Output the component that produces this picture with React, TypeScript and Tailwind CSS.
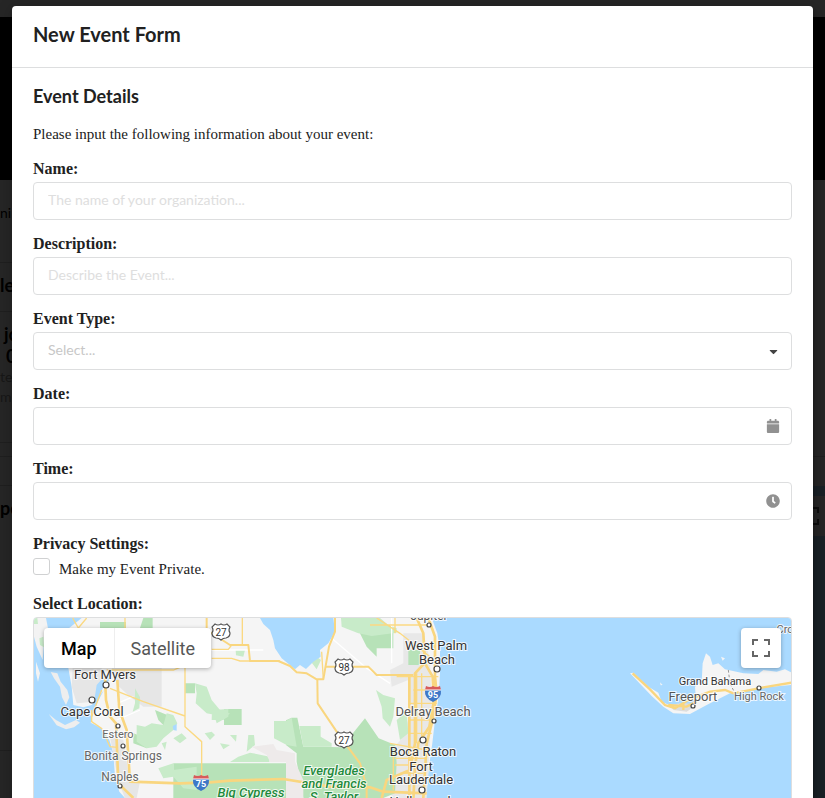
import type { ReactNode } from "react";
import { FaCalendar, FaCaretDown, FaClock } from "react-icons/fa";

const fieldBox =
  "h-[38px] w-full rounded border border-[#dddedf] bg-white px-3.5 font-['Lato',sans-serif] text-sm text-[#212121] outline-none focus:border-[#85b7d9]";
const labelText = "block text-[16px] leading-[19px] font-bold";

function Field({ id, label, icon, children }: { id: string; label: string; icon?: ReactNode; children: ReactNode }) {
  return (
    <div>
      <label htmlFor={id} className={labelText}>
        {label}
      </label>
      <div className="relative mt-1">
        {children}
        {icon && (
          <span className="pointer-events-none absolute inset-y-0 right-0 flex w-[38px] items-center justify-center">
            {icon}
          </span>
        )}
      </div>
    </div>
  );
}

type Place = { text: string; x: number; y: number; size: number; color?: string; park?: boolean };

const places: Place[] = [
  { text: "Fort Myers", x: 105, y: 679, size: 13 },
  { text: "Cape Coral", x: 92, y: 716, size: 13 },
  { text: "Estero", x: 118, y: 738, size: 11, color: "#666" },
  { text: "Bonita Springs", x: 123, y: 760, size: 12, color: "#666" },
  { text: "Naples", x: 120, y: 781, size: 12, color: "#666" },
  { text: "Jupiter", x: 429, y: 620, size: 12, color: "#555" },
  { text: "West Palm", x: 436, y: 650, size: 13 },
  { text: "Beach", x: 437, y: 664, size: 13 },
  { text: "Delray Beach", x: 433, y: 716, size: 13, color: "#555" },
  { text: "Boca Raton", x: 423, y: 756, size: 13 },
  { text: "Fort", x: 421, y: 771, size: 13 },
  { text: "Lauderdale", x: 421, y: 784, size: 13 },
  { text: "Hollywood", x: 420, y: 806, size: 13 },
  { text: "Crown Haven", x: 809, y: 633, size: 11, color: "#666" },
  { text: "Grand Bahama", x: 715, y: 685, size: 11, color: "#333" },
  { text: "Freeport", x: 693, y: 701, size: 13, color: "#555" },
  { text: "High Rock", x: 759, y: 700, size: 11, color: "#666" },
  { text: "Everglades", x: 334, y: 775, size: 13, park: true },
  { text: "and Francis", x: 334, y: 788, size: 13, park: true },
  { text: "S. Taylor", x: 334, y: 801, size: 13, park: true },
  { text: "Big Cypress", x: 251, y: 797, size: 13, park: true },
];

const towns = [
  [106, 685, 3],
  [92, 700, 3],
  [118, 726, 2],
  [123, 746, 2],
  [120, 786, 2],
  [429, 625, 2],
  [437, 669, 3],
  [434, 721, 2],
  [423, 740, 3],
  [422, 790, 3],
  [693, 706, 2],
  [759, 688, 2],
];

function UsShield({ x, y, n }: { x: number; y: number; n: string }) {
  return (
    <g transform={`translate(${x} ${y})`}>
      <path
        d="M-6-8 Q-3-6 0-8 Q3-6 6-8 L9-5 Q7-2 9 1 Q9 5 5 6 Q2 6 0 8 Q-2 6-5 6 Q-9 5-9 1 Q-7-2-9-5Z"
        fill="#fff"
        stroke="#555"
        strokeWidth="1.2"
      />
      <text y="4" textAnchor="middle" fontSize="10" fill="#333">
        {n}
      </text>
    </g>
  );
}

function InterstateShield({ x, y, n }: { x: number; y: number; n: string }) {
  return (
    <g transform={`translate(${x} ${y})`}>
      <path d="M-7-8 Q-3-6 0-8 Q3-6 7-8 L8-4 H-8Z" fill="#d75b5b" />
      <path d="M-8-4 H8 Q9 4 0 8 Q-9 4-8-4Z" fill="#3e78c8" />
      <path d="M-8-4 H8" stroke="#fff" />
      <text y="4" textAnchor="middle" fontSize="9" fontWeight="700" fill="#fff">
        {n}
      </text>
    </g>
  );
}

function FloridaMap() {
  return (
    <svg
      className="block h-full w-full font-['Roboto',sans-serif]"
      viewBox="34 618 757 280"
      preserveAspectRatio="xMinYMin slice"
      role="img"
      aria-label="Map of southern Florida and Grand Bahama"
    >
      <rect x="34" y="618" width="757" height="280" fill="#aadaff" />
      <g transform="translate(30 610) scale(0.33333)">
        {/* mainland */}
        <path
          d="M155 24H1205L1222 70 1230 120 1230 190 1226 260 1215 330 1207 400 1197 470 1188 564V864H400L340 640 285 564 268 545 255 500 250 430 238 390 215 355 182 338 195 290 222 240 205 262 185 285 160 292 130 285 125 230 115 174 110 60Z"
          fill="#f5f5f5"
        />
        <path d="M12 24H48L55 60 42 100 38 150 20 110 12 80Z M18 155L30 190 24 215 18 190Z" fill="#f3f3f3" />
        <path d="M62 186L82 190 92 215 112 240 118 262 108 285 96 262 90 230 72 205Z" fill="#eee" />
        <path d="M56 312L78 330 105 345 138 330 150 338 132 352 108 358 80 346Z" fill="#eee" />
        <path d="M12 24H22L24 42H12Z M28 85L40 80 42 112 30 105Z" fill="#c8ebc9" />
        {/* built-up areas */}
        <path d="M128 174H215L222 220 190 275 140 280 125 230Z M245 174H395V290H340L300 260 262 225Z M240 380L280 390 300 520 262 500Z M265 515H330L320 564H285Z" fill="#e6e6e6" />
        <path d="M1120 70H1180L1200 150 1205 300 1190 564H1085V420L1120 380 1140 310 1135 210 1085 230 1080 180 1120 160Z" fill="#e8e8e8" />
        {/* parks */}
        <g fill="#b7e2b8">
          <path d="M210 36H288V56H210Z M340 24H368V54H330Z M466 220H495V250H466Z M375 300L425 320 420 365 385 330Z M310 370L350 385 350 415 310 400Z" />
          <path d="M582 297H635V345H582Z M768 331L785 323 802 323 820 410H880L930 412 960 380 1005 325 1046 385 1096 405 1100 460 1095 550 1060 564V864H820V564L800 455V430L768 405Z" />
          <path d="M430 460H768V864H500L430 600Z" />
          <path d="M985 60L1020 70 1090 65V115H1040V140L1010 110Z M1135 120H1170V165H1135Z" />
        </g>
        <g fill="#c8ebc9">
          <path d="M495 220L530 230 545 270 570 300V318L530 310 497 280 500 250Z M546 300L600 310 580 330H545Z" />
          <path d="M732 333H768L785 323 800 410 770 405 732 385Z M808 348H872V380L905 400V410H820Z" />
          <path d="M933 24H1050L1075 45 1100 55V68L1025 78 985 70 935 50Z M1038 240L1060 255 1095 265 1090 320 1080 350 1058 325 1055 290Z" />
          <path d="M320 345L345 350 365 340 400 345 410 310 430 315 442 340 430 360 400 385 380 410 350 415 320 395Z M430 385L455 370 470 385 450 400Z M395 400L410 395 405 420Z" />
          <path d="M315 235L330 262 328 295 308 305 315 280Z M385 475L430 460V480L500 470V540L460 535 430 500 400 505Z M524 370L545 365 555 375 540 390Z M570 400L600 405 580 418Z M600 375H620L618 395Z M655 375H672L675 405 650 425Z M625 440L660 428 720 440 718 456H600Z M617 120H645L640 140 618 136Z M843 155L860 140 873 150 860 178Z M1100 330L1130 305 1135 370 1110 390Z M548 300L595 297V320L560 340Z" />
        </g>
        <path d="M665 410L730 402 740 420 795 430V455L820 510V564H768V456H720L710 435Z" fill="#eeeaea" />
        {/* lake and rivers */}
        <path d="M690 24L700 42 720 60 730 90 735 115 755 145 795 178 810 165 828 177 850 155 872 140 870 120 895 100 915 65 910 24Z" fill="#aadaff" />
        <path d="M428 348L440 342 440 362 430 360Z M200 225L218 205 250 180 243 205 220 230 205 270 190 290Z" fill="#aadaff" />
        {/* roads */}
        <g fill="none" stroke="#fff" strokeWidth="4">
          <path d="M905 85L1010 175 1080 220 M1085 24V160 M260 330L330 300 M262 280L310 260 M520 120H700" />
        </g>
        <g fill="none" stroke="#fbd982" strokeWidth="4">
          <path d="M128 24L145 54 170 24 M285 24V54 M230 180H430L450 172 M465 174V350L515 395V500 M240 235L340 275 465 318 M185 300V335L215 355 240 410 262 412 M215 240L185 320" />
          <path d="M545 118H595L605 105 M545 145H605L630 153H750 M637 24V105 M875 125L880 210 M1040 24L1110 70 1200 140 M1095 24V70 M1020 45H1200 M1100 200H1225 M1080 400L1190 420 M1090 430V540 M1095 445H1190 M1095 465H1185 M1160 190V400 M1175 190V380 M1110 490H1180 M1150 240H1220 M1140 280H1220 M1140 330H1215 M1140 370H1205" />
        </g>
        <g fill="none" stroke="#f9d67f" strokeWidth="6" strokeLinejoin="round">
          <path d="M530 24V60L600 105H655L660 153H745L780 168 800 187 830 190 860 208H880L897 110 915 65V24" />
          <path d="M862 208L863 280 920 365 990 460 1010 530V600 M885 170H1015L1040 195H1150" />
        </g>
        <g fill="none" stroke="#f9d67f" strokeWidth="8" strokeLinejoin="round">
          <path d="M225 200L228 270 240 320 258 340 265 520 310 564 M262 210L268 300 290 360 300 515 450 520 540 517 600 512 760 507 900 530 1020 532 1060 545 1190 550" />
          <path d="M1160 24L1180 70 1185 160 1208 200 1212 270 1198 350 1165 400 1155 470 1150 570 M1195 24L1215 80 1215 200 1220 250 1208 330 1190 400 1180 564 M1183 160L1155 190 1155 400 1140 480 1070 510 1055 564 M1138 200V564" />
        </g>
        {/* Grand Bahama */}
        <path
          d="M1800 190L1810 188 1855 230 1885 248 1895 275 1930 290 1980 295 1998 270 1995 230 2015 215 2018 160 2028 130 2040 140 2048 165 2065 160 2085 178 2140 190 2185 192 2200 180 2240 185 2265 178 2285 188V225L2210 232 2100 250 2030 285 1980 312 1930 310 1900 290 1865 258Z M2073 140L2085 145 2078 152Z M1890 217L1898 225 1892 226Z"
          fill="#f5f5f5"
        />
        <path d="M1920 285L1960 278 2000 285 1970 305 1930 300Z" fill="#ddd" />
        <path d="M1808 190L1860 238 1905 285 1935 295 1975 270 2040 245 2085 240 2110 250 2200 232 2285 218 M1915 285L1970 290 2000 275 M1935 295L1960 280V300" fill="none" stroke="#f9d67f" strokeWidth="7" />
        <path d="M2095 180L2100 220 2115 250" fill="none" stroke="#999" strokeWidth="3" strokeDasharray="8 6" />
      </g>
      {towns.map(([x, y, r]) => (
        <circle key={`${x}-${y}`} cx={x} cy={y} r={r} fill="#fff" stroke="#444" strokeWidth="1.2" />
      ))}
      {places.map((p) => (
        <text
          key={p.text}
          x={p.x}
          y={p.y}
          textAnchor="middle"
          fontSize={p.size}
          fontStyle={p.park ? "italic" : "normal"}
          fontWeight={p.park ? 500 : 400}
          fill={p.park ? "#1f8a3c" : (p.color ?? "#333")}
          stroke="#fff"
          strokeOpacity="0.8"
          strokeWidth="2"
          paintOrder="stroke"
        >
          {p.text}
        </text>
      ))}
      <UsShield x={221} y={632} n="27" />
      <UsShield x={344} y={667} n="98" />
      <UsShield x={344} y={740} n="27" />
      <InterstateShield x={201} y={783} n="75" />
      <InterstateShield x={433} y={694} n="95" />
    </svg>
  );
}

/* The page that stays behind the dimmer */
function Backdrop() {
  return (
    <div aria-hidden="true" className="flex h-screen flex-col overflow-hidden bg-white font-['Lato',sans-serif] text-black">
      <div className="flex h-[17px] shrink-0 items-end justify-between pr-0 pl-1 text-sm leading-[30px]">
        <span className="-mt-5 self-start">Tend</span>
        <span className="-mt-5 flex gap-8 self-start">
          <span>John</span>
          <span className="-mr-2">Log</span>
        </span>
      </div>
      <div className="h-[163px] shrink-0 bg-black" />
      <div className="flex flex-1 justify-between">
        <div className="w-40">
          <div className="h-[83px] border-b border-[#ccc] pt-[23px] text-sm leading-5">ni</div>
          <div className="h-[49px] border-b border-[#ccc] text-lg leading-[44px] font-bold">le</div>
          <div className="h-[131px] border-b border-[#ccc] pt-[11px]">
            <div className="pl-1 text-lg leading-[22px] font-bold">jo</div>
            <div className="pl-1.5 text-lg leading-[22px] font-bold">01</div>
            <div className="text-sm leading-5 text-[#999]">te</div>
            <div className="text-sm leading-5 text-[#999]">m</div>
          </div>
          <div className="h-[14px] border-b border-[#ccc]" />
          <div className="h-[29px] border-b border-[#ccc]" />
          <div className="h-[265px] border-b border-[#ccc] text-lg leading-[44px] font-bold">pe</div>
        </div>
        <div className="flex w-40 flex-col">
          <div className="h-[277px] shrink-0 border-b border-[#ccc]" />
          <div className="mt-[29px] flex-1 bg-[#aadaff] pt-2.5">
            <div className="flex h-10 items-center justify-end bg-white pr-1.5">
              <svg width="18" height="18" viewBox="0 0 18 18" fill="none" stroke="#555" strokeWidth="2">
                <path d="M1 6V1H6 M12 1H17V6 M17 12V17H12 M6 17H1V12" />
              </svg>
            </div>
          </div>
        </div>
      </div>
    </div>
  );
}

export default function App() {
  return (
    <div className="relative h-screen overflow-hidden">
      <Backdrop />
      <div className="absolute inset-0 overflow-hidden bg-black/85 px-3 pt-1.5">
        <div
          role="dialog"
          aria-labelledby="form-title"
          className="rounded bg-white font-['Liberation_Serif',serif] text-[#212121] shadow-[1px_3px_3px_0_rgba(0,0,0,0.2),1px_3px_15px_2px_rgba(0,0,0,0.2)]"
        >
          <header className="border-b border-[#dddedf] px-[21px] pt-[15px] pb-5">
            <h1 id="form-title" className="font-['Lato',sans-serif] text-[20px] leading-[26px] font-bold">
              New Event Form
            </h1>
          </header>
          <form className="px-[21px] pt-4 pb-5" onSubmit={(e) => e.preventDefault()}>
            <h2 className="font-['Lato',sans-serif] text-[18px] leading-6 font-bold">Event Details</h2>
            <p className="mt-4 text-[15px] leading-5">Please input the following information about your event:</p>
            <div className="mt-[15px] flex flex-col gap-3.5">
              <Field id="name" label="Name:">
                <input id="name" type="text" placeholder="The name of your organization..." className={`${fieldBox} pb-1 placeholder:text-[#dedede]`} />
              </Field>
              <Field id="description" label="Description:">
                <input id="description" type="text" placeholder="Describe the Event..." className={`${fieldBox} pb-1 placeholder:text-[#dedede]`} />
              </Field>
              <Field id="type" label="Event Type:" icon={<FaCaretDown size={13} color="#444" />}>
                <select id="type" defaultValue="" className={`${fieldBox} appearance-none pb-0.5 text-[#c7c7c7]!`}>
                  <option value="">Select...</option>
                </select>
              </Field>
              <Field id="date" label="Date:" icon={<FaCalendar size={14} color="#919191" />}>
                <input id="date" type="text" className={fieldBox} />
              </Field>
              <Field id="time" label="Time:" icon={<FaClock size={14} color="#919191" />}>
                <input id="time" type="text" className={fieldBox} />
              </Field>
              <fieldset>
                <legend className={labelText}>Privacy Settings:</legend>
                <div className="mt-1 flex h-[23px] items-start gap-[9px]">
                  <input
                    id="private"
                    type="checkbox"
                    className="mt-px size-[17px] appearance-none rounded-[3px] border border-[#d0d1d2] bg-white checked:bg-[#2185d0]"
                  />
                  <label htmlFor="private" className="pt-0.5 text-[15px] leading-5">
                    Make my Event Private.
                  </label>
                </div>
              </fieldset>
              <div>
                <div className={labelText}>Select Location:</div>
                <div className="relative mt-1 h-[282px] overflow-hidden rounded border border-[#dddedf]">
                  <FloridaMap />
                  <div className="absolute top-2.5 left-2.5 flex h-10 overflow-hidden rounded-sm bg-white font-['Roboto',sans-serif] text-[18px] shadow-[0_1px_4px_rgba(0,0,0,0.3)]">
                    <button type="button" className="px-[17px] font-medium text-black">
                      Map
                    </button>
                    <button type="button" className="border-l border-[#eee] px-4 text-[#565656]">
                      Satellite
                    </button>
                  </div>
                  <button
                    type="button"
                    aria-label="Toggle fullscreen view"
                    className="absolute top-2.5 right-2.5 flex size-10 items-center justify-center rounded-sm bg-white shadow-[0_1px_4px_rgba(0,0,0,0.3)]"
                  >
                    <svg width="18" height="18" viewBox="0 0 18 18" fill="none" stroke="#666" strokeWidth="2">
                      <path d="M1 6V1H6 M12 1H17V6 M17 12V17H12 M6 17H1V12" />
                    </svg>
                  </button>
                </div>
              </div>
            </div>
          </form>
        </div>
      </div>
    </div>
  );
}
